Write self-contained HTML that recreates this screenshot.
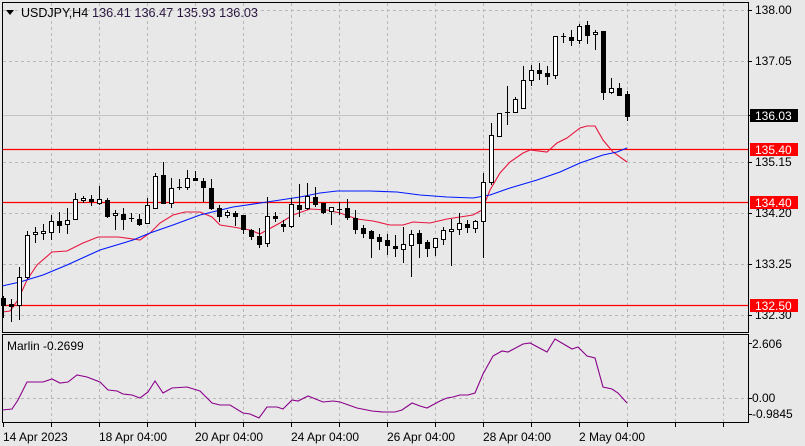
<!DOCTYPE html>
<html><head><meta charset="utf-8"><style>
html,body{margin:0;padding:0;background:#e8e8e8;}
svg{display:block;font-family:"Liberation Sans",sans-serif;font-size:12px;}
</style></head><body>
<svg id="s" width="805" height="446" xmlns="http://www.w3.org/2000/svg">
<rect width="805" height="446" fill="#e8e8e8"/>
<g id="grid" stroke="#b8b8b8" stroke-dasharray="3,3" stroke-width="1"></g>
<g id="lines"></g>
<g id="candles"></g>
<rect x="2.5" y="2.5" width="746" height="330" fill="none" stroke="#000"/>
<rect x="2.5" y="334.5" width="746" height="88" fill="none" stroke="#000"/>
<g fill="#000">
<polygon points="6,10 14,10 10,15"/>
<text x="21" y="17" font-size="12.5">USDJPY,H4</text>
<text x="92" y="17" font-size="12.5" fill="#2a1640" textLength="166" lengthAdjust="spacingAndGlyphs">136.41 136.47 135.93 136.03</text>
<text x="755" y="14">138.00</text>
<text x="755" y="65">137.05</text>
<text x="755" y="166">135.15</text>
<text x="755" y="217">134.20</text>
<text x="755" y="268">133.25</text>
<text x="755" y="319">132.30</text>
<text x="752" y="348">2.606</text>
<text x="752" y="402">0.00</text>
<text x="752" y="418">-0.9845</text>
<text x="7" y="350">Marlin -0.2699</text>
<text x="3" y="441">14 Apr 2023</text>
<text x="99" y="441">18 Apr 04:00</text>
<text x="195" y="441">20 Apr 04:00</text>
<text x="291" y="441">24 Apr 04:00</text>
<text x="387" y="441">26 Apr 04:00</text>
<text x="483" y="441">28 Apr 04:00</text>
<text x="579" y="441">2 May 04:00</text>
</g>
<rect x="750" y="109" width="48" height="13" fill="#000"/>
<text x="755" y="120" fill="#fff">136.03</text>
<rect x="750" y="143" width="48" height="13" fill="#f00"/>
<text x="755" y="154" fill="#fff">135.40</text>
<rect x="750" y="196" width="48" height="13" fill="#f00"/>
<text x="755" y="207" fill="#fff">134.40</text>
<rect x="750" y="299" width="48" height="13" fill="#f00"/>
<text x="755" y="310" fill="#fff">132.50</text>
</svg>
<script>
var NS="http://www.w3.org/2000/svg";
function el(p,t,a){var e=document.createElementNS(NS,t);for(var k in a)e.setAttribute(k,a[k]);p.appendChild(e);return e;}
var g=document.getElementById('grid');
for(var x=51;x<748;x+=48){el(g,'line',{x1:x+.5,y1:3,x2:x+.5,y2:332});el(g,'line',{x1:x+.5,y1:335,x2:x+.5,y2:422});}
[10,61,162,213,264,315].forEach(function(y){el(g,'line',{x1:3,y1:y+.5,x2:748,y2:y+.5});});
el(g,'line',{x1:3,y1:398.5,x2:748,y2:398.5});
var s=document.getElementById('s');
[10,61,115,162,213,264,315,343,398,414].forEach(function(y){el(s,'line',{x1:748,y1:y+.5,x2:752,y2:y+.5,stroke:'#000'});});
for(var x=3;x<748;x+=48){el(s,'line',{x1:x+.5,y1:422,x2:x+.5,y2:427,stroke:'#000'});}
var L=document.getElementById('lines');
el(L,'line',{x1:3,y1:115.5,x2:748,y2:115.5,stroke:'#c4c4c4'});
[149,202,305].forEach(function(y){el(L,'line',{x1:3,y1:y+.5,x2:748,y2:y+.5,stroke:'#f00','stroke-width':1.3});});
function pl(pts,c){el(L,'polyline',{points:pts,fill:'none',stroke:c,'stroke-width':1.1});}
pl("2,312 10,311 18,300 27,280 37,265 52,252 67,251 83,243 98,237 118,237 133,239 140,240 150,233 160,223 173,215 185,212 200,212 212,217 220,225 233,227 250,230 260,234 267,230 280,223 293,215 310,209 327,210 340,213 357,219 373,221 390,225 403,225 413,222 430,223 447,219 460,217 473,215 482,210 490,190 500,173 510,162 523,153 530,150 547,152 557,143 567,138 580,128 587,126 595,126 603,140 613,152 627,162","#e8143c");
pl("2,286 20,282 43,275 67,265 100,250 133,240 150,233 173,225 200,215 233,207 267,202 300,197 320,193 337,191 370,191 397,192 420,195 447,197 473,198 490,195 510,188 537,180 560,172 580,163 603,155 617,152 627,148","#0018ff");
pl("2,410 12,409 18,400 27,382 43,382 52,379 60,383 68,382 77,375 87,377 100,382 108,390 117,391 123,394 132,395 140,398 148,392 155,381 163,393 172,388 187,387 200,391 212,403 220,405 230,405 243,413 250,414 259,418 267,407 277,407 283,409 292,400 298,401 308,396 323,402 333,401 340,402 357,408 372,411 383,412 395,412 402,410 412,403 420,406 427,408 440,401 447,398 453,397 460,395 468,395 475,393 483,374 493,356 502,351 508,352 523,344 530,343 547,352 555,339 572,349 578,347 587,356 595,358 603,387 612,389 618,393 627,403","#8b008b");
var C=[[0,298,305,296,318],[0,304,306,299,322],[1,277,305,267,320],[1,235,277,231,279],[1,232,234,227,243],[1,231,233,224,240],[1,221,232,215,240],[0,221,225,212,233],[1,220,224,208,234],[1,199,219,193,220],[1,198,200,196,203],[0,199,201,195,206],[1,199,203,186,205],[0,200,216,198,218],[1,213,215,210,230],[0,214,219,208,230],[2,218,218,213,222],[0,219,224,214,226],[1,205,223,198,224],[1,176,208,173,208],[0,175,203,162,203],[1,188,203,178,208],[2,187,187,179,190],[1,178,187,170,190],[0,178,180,171,180],[0,181,187,178,202],[0,188,208,179,210],[0,208,216,205,222],[1,212,215,210,218],[0,213,216,211,226],[0,215,229,215,234],[0,230,236,229,240],[0,236,244,228,248],[1,216,243,197,247],[0,216,218,212,222],[0,224,226,220,232],[1,204,226,198,228],[0,205,209,184,217],[1,196,208,183,210],[0,197,204,187,207],[0,203,212,203,214],[1,207,211,207,225],[2,209,209,202,215],[0,208,217,199,220],[0,218,229,210,234],[0,228,233,225,238],[0,231,238,230,258],[0,237,241,234,250],[0,240,245,234,255],[0,246,248,235,257],[1,244,249,227,263],[1,234,245,230,277],[0,233,243,230,258],[0,242,248,240,257],[1,238,247,238,256],[1,230,239,227,245],[1,229,231,219,266],[1,223,229,213,235],[0,224,227,220,233],[1,221,228,220,233],[1,182,221,173,258],[1,135,182,123,185],[1,113,136,113,137],[2,112,112,86,125],[1,99,112,97,113],[1,80,108,66,108],[1,70,80,65,86],[0,70,73,63,80],[0,73,76,66,85],[1,36,75,36,79],[2,36,36,33,43],[0,37,40,30,46],[1,26,40,24,44],[0,25,35,21,44],[1,32,34,30,50],[0,31,92,31,100],[1,88,92,78,94],[0,88,95,83,96],[0,94,116,91,121]];
var K=document.getElementById('candles');
C.forEach(function(c,i){var x=3+8*i;
el(K,'line',{x1:x+.5,y1:c[3],x2:x+.5,y2:c[4],stroke:'#000'});
if(c[0]==2){el(K,'line',{x1:x-2,y1:c[1]+.5,x2:x+3,y2:c[1]+.5,stroke:'#000'});}
else{var h=Math.max(c[2]-c[1],1);el(K,'rect',{x:x-1.5,y:c[1]+.5,width:4,height:h,fill:c[0]?'#fff':'#000',stroke:'#000'});}
});
</script>
</body></html>
